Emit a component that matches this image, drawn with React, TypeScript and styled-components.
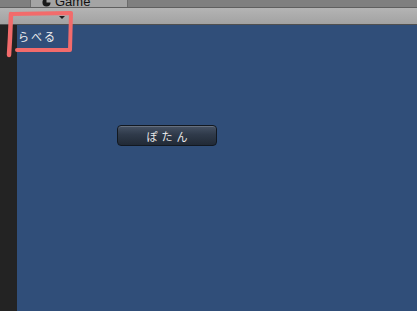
import styled, { createGlobalStyle } from "styled-components";

const GlobalStyle = createGlobalStyle`
  html, body {
    margin: 0;
    padding: 0;
    overflow: hidden;
    background: #232323;
  }
`;

export default function App() {
  return (
    <>
      <GlobalStyle />
      <Window>
        <TabBar>
          <Tab>
            <TabIcon viewBox="0 0 10 10">
              <path d="M5 0.5 A4.5 4.5 0 1 0 9.5 5 L5 5 Z" fill="#1a1a1a" />
            </TabIcon>
            <TabText>Game</TabText>
          </Tab>
        </TabBar>
        <Toolbar>
          <DropArrow />
        </Toolbar>
        <Body>
          <SideStrip />
          <GameView>
            <Label>らべる</Label>
            <GameButton>ぽたん</GameButton>
          </GameView>
        </Body>
        {/* 赤いマーカー */}
        <Marker viewBox="0 0 417 311">
          <path
            d="M11 14 L71 13 L70 50 L17 50"
            fill="none"
            stroke="#f26b6b"
            strokeWidth="4"
            strokeLinecap="round"
            strokeLinejoin="round"
          />
          <path
            d="M11 14 L10 38 L9 55"
            fill="none"
            stroke="#f26b6b"
            strokeWidth="4.5"
            strokeLinecap="round"
          />
        </Marker>
      </Window>
    </>
  );
}

const Window = styled.div`
  position: relative;
  display: flex;
  flex-direction: column;
  width: 417px;
  height: 311px;
  overflow: hidden;
  font-family: "Noto Sans CJK JP", "Liberation Sans", sans-serif;
`;

const TabBar = styled.div`
  display: flex;
  height: 7px;
  padding-left: 30px;
  background: #7f7f7f;
  overflow: hidden;
`;

const Tab = styled.div`
  display: flex;
  align-items: flex-end;
  gap: 4px;
  width: 98px;
  padding-left: 11px;
  box-sizing: border-box;
  background: #a4a4a4;
  border-left: 1px solid #6c6c6c;
  border-right: 1px solid #6c6c6c;
`;

const TabIcon = styled.svg`
  width: 9px;
  height: 9px;
  flex-shrink: 0;
`;

const TabText = styled.span`
  font-family: "Liberation Sans", sans-serif;
  font-size: 13px;
  line-height: 10px;
  color: #111;
`;

const Toolbar = styled.div`
  display: flex;
  align-items: center;
  height: 16px;
  padding-left: 59px;
  border-top: 1px solid #5f5f5f;
  border-bottom: 1px solid #505050;
  background: linear-gradient(#b4b4b4, #a2a2a2);
`;

const DropArrow = styled.span`
  width: 0;
  height: 0;
  margin-top: 2px;
  border-left: 3px solid transparent;
  border-right: 3px solid transparent;
  border-top: 3px solid #1c1c1c;
`;

const Body = styled.div`
  display: flex;
  flex: 1;
`;

const SideStrip = styled.div`
  width: 17px;
  background: #232323;
`;

const GameView = styled.div`
  display: flex;
  flex-direction: column;
  align-items: flex-start;
  flex: 1;
  background: #304e79;
`;

const Label = styled.div`
  height: 20px;
  margin-top: 1px;
  padding-left: 1px;
  font-size: 11px;
  line-height: 20px;
  color: #f2f2f2;
  letter-spacing: 2px;
`;

const GameButton = styled.button`
  width: 100px;
  height: 21px;
  margin: 79px 0 0 100px;
  padding: 0;
  border: 1px solid #121820;
  border-radius: 4px;
  background: linear-gradient(#465264 0%, #2f3a4a 45%, #212a36 100%);
  box-shadow: inset 0 1px 0 rgba(255, 255, 255, 0.18);
  font-family: "Noto Sans CJK JP", "Liberation Sans", sans-serif;
  font-size: 11px;
  letter-spacing: 4px;
  text-indent: 4px;
  color: #ececec;
`;

const Marker = styled.svg`
  position: absolute;
  inset: 0;
  width: 417px;
  height: 311px;
  pointer-events: none;
`;
